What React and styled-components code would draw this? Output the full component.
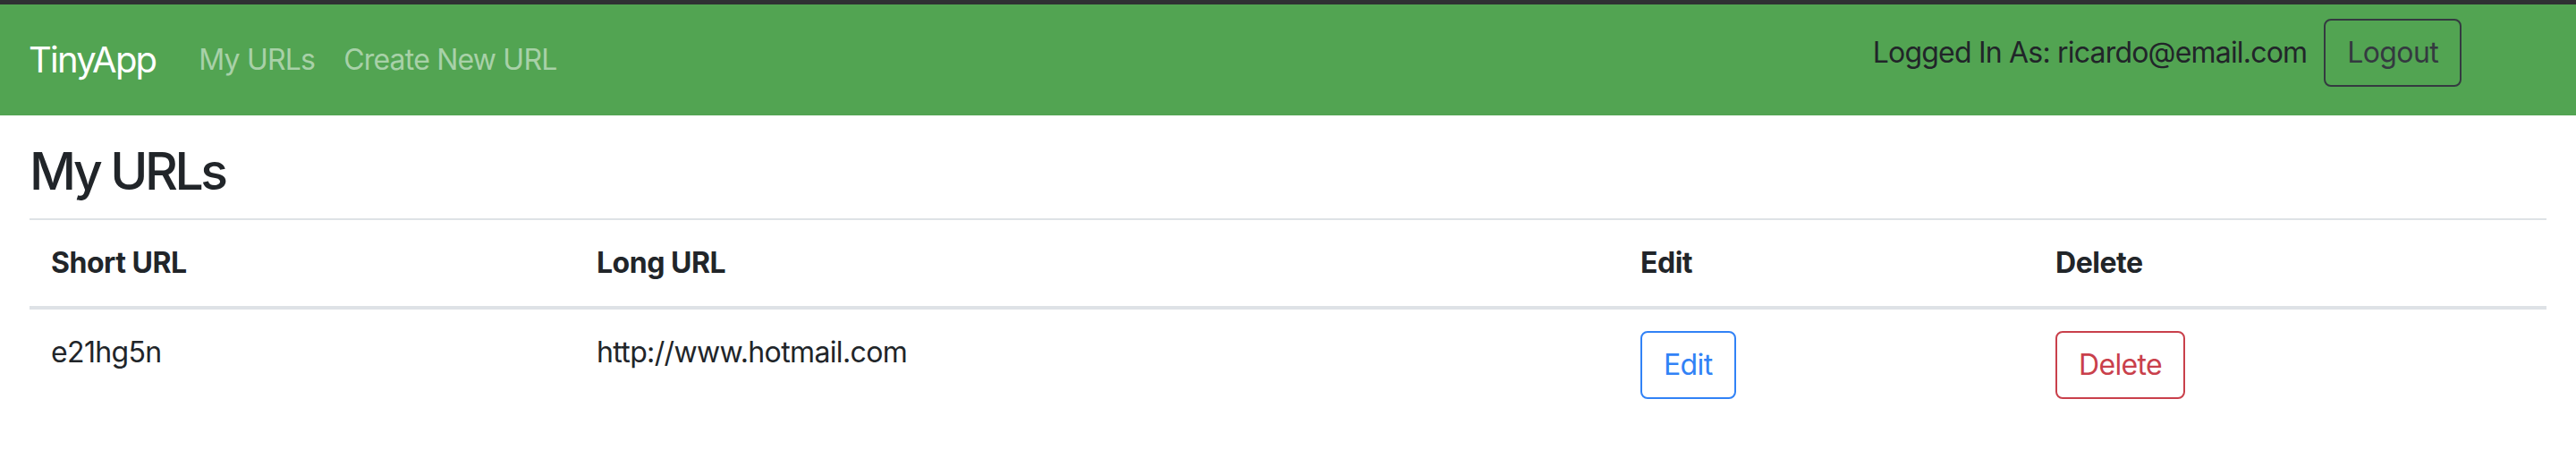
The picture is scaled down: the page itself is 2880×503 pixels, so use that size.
import React from "react";
import styled, { createGlobalStyle } from "styled-components";

const Global = createGlobalStyle`
  html, body { margin: 0; padding: 0; background: #fff; }
  body {
    font-family: Inter, "Noto Sans", "Liberation Sans", sans-serif;
    color: #212529;
    -webkit-font-smoothing: antialiased;
  }
  * { box-sizing: border-box; }
`;

const NavBar = styled.nav`
  display: flex;
  align-items: center;
  height: 129px;
  border-top: 5px solid #2f3033;
  background: #52a452;
  padding: 16px 32px;
`;

const Brand = styled.a`
  font-size: 40px;
  line-height: 60px;
  padding: 10px 0;
  margin-right: 32px;
  color: #fff;
  text-decoration: none;
  letter-spacing: -0.045em;
`;

const NavLinks = styled.div`
  display: flex;
  align-items: center;
`;

const NavLink = styled.a`
  font-size: 32px;
  line-height: 48px;
  padding: 16px 16px;
  color: rgba(255, 255, 255, 0.5);
  text-decoration: none;
  letter-spacing: -0.025em;
`;

const UserArea = styled.div`
  margin-left: auto;
  margin-right: 96px;
  align-self: flex-start;
  display: flex;
  align-items: center;
  gap: 19px;
`;

const UserText = styled.span`
  font-size: 32px;
  line-height: 48px;
  color: #212529;
  letter-spacing: -0.025em;
`;

const OutlineButton = styled.button`
  font-family: inherit;
  font-size: 32px;
  line-height: 48px;
  padding: 12px 24px;
  border: 2px solid ${(p) => p.$color};
  border-radius: 8px;
  background: transparent;
  color: ${(p) => p.$color};
  letter-spacing: -0.02em;
  cursor: pointer;
`;

const Main = styled.main`
  padding: 27px 33px 0;
`;

const Heading = styled.h2`
  margin: 0 0 16px;
  font-size: 57px;
  line-height: 72px;
  font-weight: 500;
  letter-spacing: -0.06em;
  color: #212529;
`;

const Table = styled.table`
  width: 100%;
  border-collapse: collapse;
  font-size: 32px;
  line-height: 48px;
  color: #212529;
`;

const HeadCell = styled.th`
  text-align: left;
  font-weight: 700;
  padding: 24px;
  vertical-align: bottom;
  border-top: 2px solid #dee2e6;
  border-bottom: 4px solid #dee2e6;
  letter-spacing: -0.015em;
`;

const Cell = styled.td`
  padding: 24px;
  vertical-align: top;
  border-top: 2px solid #dee2e6;
  letter-spacing: -0.02em;
`;

const columns = [610, 1167, 464, 573];

export default function App() {
  return (
    <>
      <Global />
      <NavBar>
        <Brand href="#">TinyApp</Brand>
        <NavLinks>
          <NavLink href="#">My URLs</NavLink>
          <NavLink href="#">Create New URL</NavLink>
        </NavLinks>
        <UserArea>
          <UserText>Logged In As: ricardo@email.com</UserText>
          <OutlineButton $color="#343a40">Logout</OutlineButton>
        </UserArea>
      </NavBar>
      <Main>
        <Heading>My URLs</Heading>
        <Table>
          <colgroup>
            {columns.map((w, i) => (
              <col key={i} style={{ width: w }} />
            ))}
          </colgroup>
          <thead>
            <tr>
              <HeadCell>Short URL</HeadCell>
              <HeadCell>Long URL</HeadCell>
              <HeadCell>Edit</HeadCell>
              <HeadCell>Delete</HeadCell>
            </tr>
          </thead>
          <tbody>
            <tr>
              <Cell>e21hg5n</Cell>
              <Cell>http://www.hotmail.com</Cell>
              <Cell>
                <OutlineButton $color="#3182f6">Edit</OutlineButton>
              </Cell>
              <Cell>
                <OutlineButton $color="#c9404b">Delete</OutlineButton>
              </Cell>
            </tr>
          </tbody>
        </Table>
      </Main>
    </>
  );
}
